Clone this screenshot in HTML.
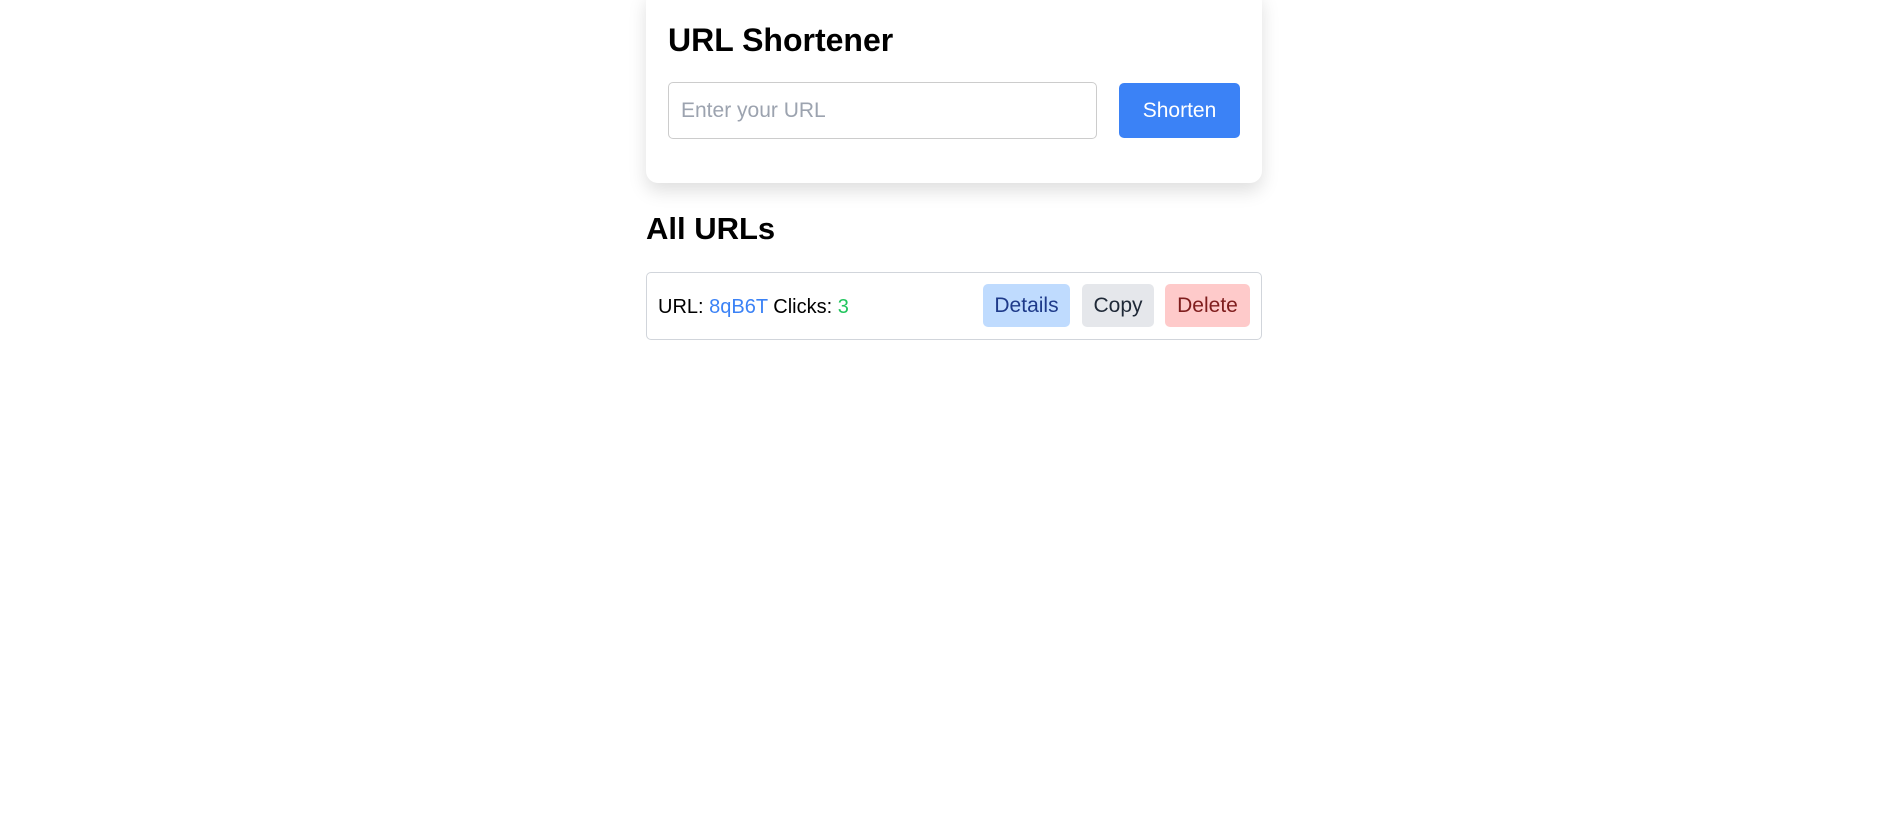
<!DOCTYPE html>
<html><head><style>
body{margin:0;background:#fff;font-family:"Liberation Sans",sans-serif;width:1901px;height:836px;position:relative;overflow:hidden}
.card{position:absolute;left:646px;top:-10px;width:616px;height:193px;background:#fff;border-radius:12px;box-shadow:0 8px 18px rgba(0,0,0,.13)}
h1{position:absolute;left:668px;top:20px;margin:0;font-size:32px;font-weight:bold;color:#000;line-height:40px}
.inp{position:absolute;left:668px;top:82px;width:429px;height:57px;border:1px solid #ccc;border-radius:5px;box-sizing:border-box}
.inp span{position:absolute;left:12px;top:16px;font-size:21px;color:#9ca3af}
.btn{position:absolute;left:1119px;top:83px;width:121px;height:55px;background:#3b82f6;border-radius:5px;color:#fff;font-size:21px;text-align:center;line-height:55px}
h2{position:absolute;left:646px;top:208px;margin:0;font-size:31px;font-weight:bold;line-height:42px}
.item{position:absolute;left:646px;top:272px;width:616px;height:68px;border:1px solid #d1d5db;border-radius:5px;box-sizing:border-box}
.txt{position:absolute;left:658px;top:292px;font-size:20px;line-height:30px;color:#000}
.b{position:absolute;top:284px;height:43px;line-height:43px;border-radius:5px;font-size:21px;text-align:center}
</style></head><body>
<div class="card"></div>
<h1>URL Shortener</h1>
<div class="inp"><span>Enter your URL</span></div>
<div class="btn">Shorten</div>
<h2>All URLs</h2>
<div class="item"></div>
<div class="txt">URL: <span style="color:#3b82f6">8qB6T</span> Clicks: <span style="color:#22c55e">3</span></div>
<div class="b" style="left:983px;width:87px;background:#bfdbfe;color:#1e3a8a">Details</div>
<div class="b" style="left:1082px;width:72px;background:#e5e7eb;color:#1f2937">Copy</div>
<div class="b" style="left:1165px;width:85px;background:#fecaca;color:#7f1d1d">Delete</div>
</body></html>
